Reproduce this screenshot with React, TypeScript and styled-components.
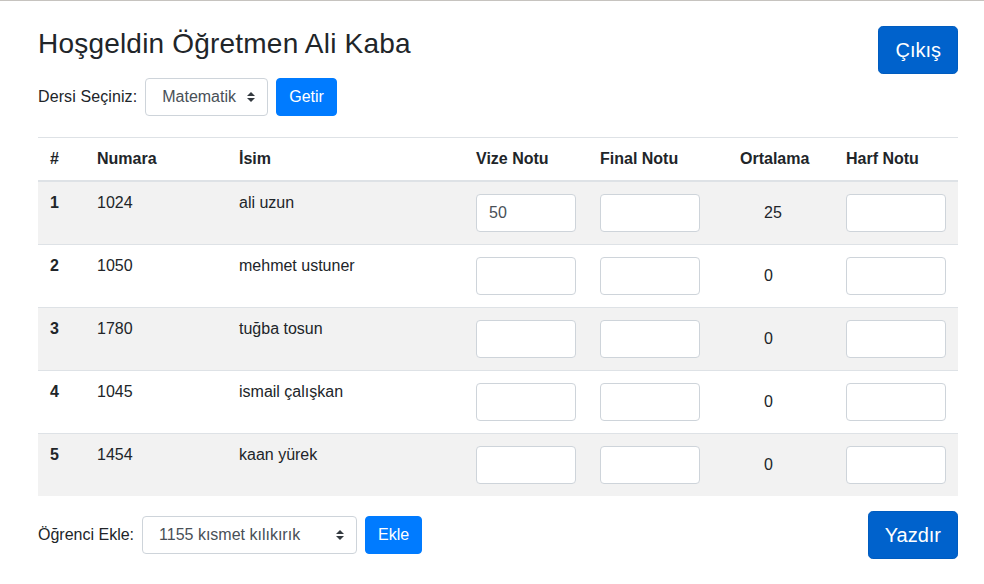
import React from "react";
import styled, { createGlobalStyle } from "styled-components";

const GlobalStyle = createGlobalStyle`
  html, body { margin: 0; padding: 0; background: #ffffff; }
  body {
    font-family: "Liberation Sans", Arial, sans-serif;
    font-size: 16px;
    line-height: 1.5;
    color: #212529;
  }
  * { box-sizing: border-box; }
`;

const TopRule = styled.div`
  height: 1px;
  background: #c6c3bf;
`;

const Page = styled.div`
  width: 958px;
  padding-left: 38px;
`;

const Header = styled.header`
  display: flex;
  justify-content: space-between;
  align-items: flex-start;
  padding-top: 25px;
`;

const HeaderLeft = styled.div`
  display: flex;
  flex-direction: column;
`;

const Title = styled.h3`
  margin: 1px 0 0;
  font-size: 28px;
  font-weight: 400;
  line-height: 1.2;
  letter-spacing: 0.2px;
  color: #212529;
`;

const FormRow = styled.div<{ $mt?: number }>`
  display: flex;
  align-items: center;
  gap: 8px;
  margin-top: ${(p) => p.$mt ?? 0}px;
`;

const Label = styled.label<{ $ls?: number }>`
  font-size: 16px;
  letter-spacing: ${(p) => p.$ls ?? 0}px;
  color: #212529;
`;

const SelectWrap = styled.div`
  position: relative;
  display: inline-block;
`;

const Select = styled.select<{ $w: number }>`
  appearance: none;
  -webkit-appearance: none;
  width: ${(p) => p.$w}px;
  height: 38px;
  padding: 6px 24px 6px 16px;
  font-family: "Liberation Sans", Arial, sans-serif;
  font-size: 16px;
  color: #495057;
  background: #ffffff;
  border: 1px solid #ced4da;
  border-radius: 4px;
  outline: none;
`;

const Caret = styled.svg`
  position: absolute;
  right: 13px;
  top: 14px;
  width: 8px;
  height: 10px;
  pointer-events: none;
`;

const Button = styled.button<{ $size?: "lg" | "md"; $dark?: boolean }>`
  font-family: "Liberation Sans", Arial, sans-serif;
  font-size: ${(p) => (p.$size === "lg" ? 20 : 16)}px;
  line-height: 1.5;
  padding: ${(p) => (p.$size === "lg" ? "8px 16px" : "6px 12px")};
  height: ${(p) => (p.$size === "lg" ? 48 : 38)}px;
  color: #ffffff;
  background: ${(p) => (p.$dark ? "#0062cc" : "#007bff")};
  border: 1px solid ${(p) => (p.$dark ? "#005cbf" : "#007bff")};
  border-radius: ${(p) => (p.$size === "lg" ? 4.8 : 4)}px;
  cursor: pointer;
`;

const Table = styled.table`
  width: 920px;
  margin-top: 21px;
  border-collapse: collapse;
  table-layout: fixed;
  line-height: normal;
`;

const Th = styled.th`
  text-align: left;
  font-weight: 700;
  padding: 12px;
  border-top: 1px solid #dee2e6;
  border-bottom: 2px solid #dee2e6;
  vertical-align: top;
`;

const Row = styled.tr<{ $striped: boolean }>`
  background: ${(p) => (p.$striped ? "#f2f2f2" : "transparent")};
`;

const RowHead = styled.th`
  text-align: left;
  font-weight: 700;
  padding: 12px;
  border-top: 1px solid #dee2e6;
  vertical-align: top;
`;

const Td = styled.td<{ $middle?: boolean; $pl?: number }>`
  padding: 12px;
  padding-left: ${(p) => p.$pl ?? 12}px;
  border-top: 1px solid #dee2e6;
  vertical-align: ${(p) => (p.$middle ? "middle" : "top")};
`;

const GradeInput = styled.input`
  display: block;
  width: 100px;
  height: 38px;
  padding: 6px 12px;
  font-family: "Liberation Sans", Arial, sans-serif;
  font-size: 16px;
  color: #495057;
  background: #ffffff;
  border: 1px solid #ced4da;
  border-radius: 4px;
  outline: none;
`;

const Footer = styled.footer`
  display: flex;
  justify-content: space-between;
  align-items: center;
  margin-top: 15px;
`;

const CaretIcon = () => (
  <Caret viewBox="0 0 4 5">
    <path fill="#343a40" d="M2 0L0 2h4zm0 5L0 3h4z" />
  </Caret>
);

const students = [
  { no: 1, num: "1024", name: "ali uzun", vize: "50", avg: 25 },
  { no: 2, num: "1050", name: "mehmet ustuner", vize: "", avg: 0 },
  { no: 3, num: "1780", name: "tuğba tosun", vize: "", avg: 0 },
  { no: 4, num: "1045", name: "ismail çalışkan", vize: "", avg: 0 },
  { no: 5, num: "1454", name: "kaan yürek", vize: "", avg: 0 },
];

const widths = [47, 142, 237, 124, 140, 106, 124];

export default function App() {
  return (
    <>
      <GlobalStyle />
      <TopRule />
      <Page>
        <Header>
          <HeaderLeft>
            <Title>Hoşgeldin Öğretmen Ali Kaba</Title>
            <FormRow $mt={17}>
              <Label $ls={0.1}>Dersi Seçiniz:</Label>
              <SelectWrap>
                <Select $w={123} defaultValue="mat">
                  <option value="mat">Matematik</option>
                </Select>
                <CaretIcon />
              </SelectWrap>
              <Button>Getir</Button>
            </FormRow>
          </HeaderLeft>
          <Button $size="lg" $dark>
            Çıkış
          </Button>
        </Header>

        <Table>
          <colgroup>
            {widths.map((w, i) => (
              <col key={i} style={{ width: w }} />
            ))}
          </colgroup>
          <thead>
            <tr>
              <Th>#</Th>
              <Th>Numara</Th>
              <Th>İsim</Th>
              <Th>Vize Notu</Th>
              <Th>Final Notu</Th>
              <Th>Ortalama</Th>
              <Th>Harf Notu</Th>
            </tr>
          </thead>
          <tbody>
            {students.map((s, i) => (
              <Row key={s.no} $striped={i % 2 === 0}>
                <RowHead>{s.no}</RowHead>
                <Td>{s.num}</Td>
                <Td>{s.name}</Td>
                <Td>
                  <GradeInput defaultValue={s.vize} />
                </Td>
                <Td>
                  <GradeInput />
                </Td>
                <Td $middle $pl={36}>
                  {s.avg}
                </Td>
                <Td>
                  <GradeInput />
                </Td>
              </Row>
            ))}
          </tbody>
        </Table>

        <Footer>
          <FormRow>
            <Label>Öğrenci Ekle:</Label>
            <SelectWrap>
              <Select $w={215} defaultValue="1155">
                <option value="1155">1155 kısmet kılıkırık</option>
              </Select>
              <CaretIcon />
            </SelectWrap>
            <Button>Ekle</Button>
          </FormRow>
          <Button $size="lg" $dark>
            Yazdır
          </Button>
        </Footer>
      </Page>
    </>
  );
}
